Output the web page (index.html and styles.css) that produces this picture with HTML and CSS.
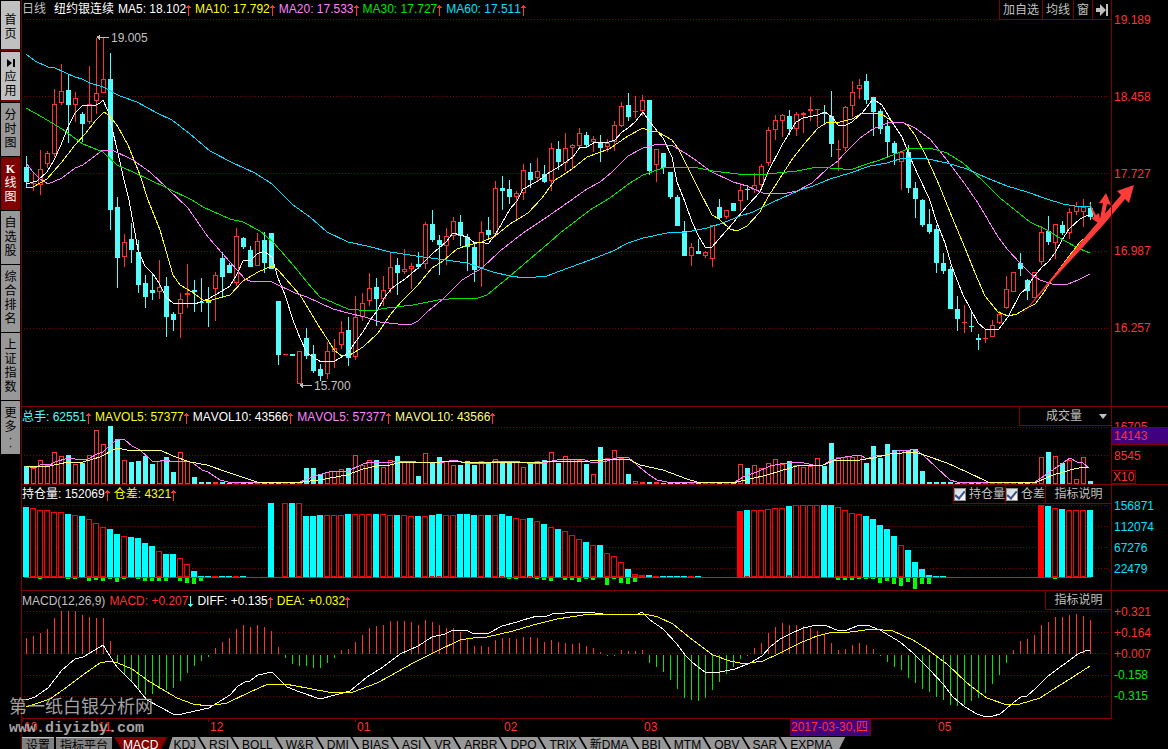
FILE: index.html
```html
<!DOCTYPE html>
<html lang="zh-CN">
<head>
  <meta charset="UTF-8" />
  <title>纽约银连续 日线</title>
  <link rel="stylesheet" href="styles.css">
</head>
<body>
  <svg class="sprites" width="0" height="0" aria-hidden="true">
    <symbol id="up" viewBox="0 0 5 12">
      <path d="M2 1h1v11h-1zM1 2h3v1h-3zM0 3h5v1h-5z" fill="#ff3232"/>
    </symbol>
    <symbol id="down" viewBox="0 0 5 12">
      <path d="M2 0h1v11h-1zM1 9h3v1h-3zM0 8h5v1h-5z" fill="#54fcfc"/>
    </symbol>
  </svg>

  <div class="app">
    <nav class="sidebar">
      <button type="button" class="side light">首页</button>
      <button type="button" class="side light">
        <svg width="8" height="8" viewBox="0 0 8 8"><path d="M0 0l5 4l-5 4zM6 0h2v8h-2z"/></svg>
        应用
      </button>
      <button type="button" class="side">分时图</button>
      <button type="button" class="side active"><b>K</b>线图</button>
      <button type="button" class="side">自选股</button>
      <button type="button" class="side">综合排名</button>
      <button type="button" class="side">上证指数</button>
      <button type="button" class="side more">更多<span>·</span><span>·</span></button>
    </nav>

    <main class="main">
      <section class="pane">
        <div class="plot">
          <header class="head price-head">
            <span class="silver period">日线</span>
            <span class="white">纽约银连续</span>
            <span class="white">MA5: 18.102<svg class="arrow"><use href="#up"/></svg></span>
            <span class="yellow">MA10: 17.792<svg class="arrow"><use href="#up"/></svg></span>
            <span class="pink">MA20: 17.533<svg class="arrow"><use href="#up"/></svg></span>
            <span class="green">MA30: 17.727<svg class="arrow"><use href="#up"/></svg></span>
            <span class="aqua">MA60: 17.511<svg class="arrow"><use href="#up"/></svg></span>
            <div class="tools">
              <button type="button">加自选</button>
              <button type="button">均线</button>
              <button type="button">窗</button>
              <button type="button" aria-label="下一个">
                <svg width="12" height="12" viewBox="0 0 12 12"><path d="M0 4h4v-4l6 6l-6 6v-4h-4zM10 0h2v12h-2z" fill="#c0c0c0"/></svg>
              </button>
            </div>
          </header>
          <svg class="chart price-chart" id="price" viewBox="22 18 1089 388" preserveAspectRatio="none"></svg>
        </div>
        <div class="axis price-axis">
          <span>19.189</span>
          <span>18.458</span>
          <span>17.727</span>
          <span>16.987</span>
          <span>16.257</span>
        </div>
      </section>

      <section class="pane">
        <div class="plot">
          <header class="head tall">
            <span class="cyan">总手: 62551<svg class="arrow"><use href="#up"/></svg></span>
            <span class="yellow">MAVOL5: 57377<svg class="arrow"><use href="#up"/></svg></span>
            <span class="white">MAVOL10: 43566<svg class="arrow"><use href="#up"/></svg></span>
            <span class="pink">MAVOL5: 57377<svg class="arrow"><use href="#up"/></svg></span>
            <span class="cream">MAVOL10: 43566<svg class="arrow"><use href="#up"/></svg></span>
            <div class="tools picker">
              <select aria-label="指标">
                <option>成交量</option>
              </select>
              <svg width="8" height="5" viewBox="0 0 8 5"><path d="M0 0h8l-4 5z" fill="#c0c0c0"/></svg>
            </div>
          </header>
          <svg class="chart volume-chart" id="volume" viewBox="22 426 1089 58" preserveAspectRatio="none"></svg>
        </div>
        <div class="axis volume-axis">
          <span class="top">16705</span>
          <span class="current">14143</span>
          <span>8545</span>
          <span class="unit">X10</span>
        </div>
      </section>

      <section class="pane">
        <div class="plot">
          <header class="head">
            <span class="white">持仓量: 152069<svg class="arrow"><use href="#up"/></svg></span>
            <span class="yellow">仓差: 4321<svg class="arrow"><use href="#up"/></svg></span>
            <div class="tools">
              <label><input type="checkbox" checked>持仓量</label>
              <label><input type="checkbox" checked>仓差</label>
              <button type="button" class="help">指标说明</button>
            </div>
          </header>
          <svg class="chart position-chart" id="position" viewBox="22 503 1089 87" preserveAspectRatio="none"></svg>
        </div>
        <div class="axis position-axis">
          <span>156871</span>
          <span>112074</span>
          <span>67276</span>
          <span>22479</span>
        </div>
      </section>

      <section class="pane last">
        <div class="plot">
          <header class="head tall">
            <span class="silver">MACD(12,26,9)</span>
            <span class="red">MACD: +0.207<svg class="arrow"><use href="#down"/></svg></span>
            <span class="white">DIFF: +0.135<svg class="arrow"><use href="#up"/></svg></span>
            <span class="yellow">DEA: +0.032<svg class="arrow"><use href="#up"/></svg></span>
            <div class="tools">
              <button type="button" class="help">指标说明</button>
            </div>
          </header>
          <svg class="chart macd-chart" id="macd" viewBox="22 610 1089 108" preserveAspectRatio="none"></svg>
        </div>
        <div class="axis macd-axis">
          <span>+0.321</span>
          <span>+0.164</span>
          <span>+0.007</span>
          <span class="neg">-0.158</span>
          <span class="neg">-0.315</span>
        </div>
      </section>

      <svg class="chart months" id="months" viewBox="22 719 1146 18" preserveAspectRatio="none"></svg>

      <footer class="bottom">
        <button type="button" class="box">设置</button>
        <button type="button" class="box">指标平台</button>
        <button type="button" class="tab current">MACD</button>
        <div class="tabs">
          <button type="button" class="tab">KDJ</button>
          <button type="button" class="tab">RSI</button>
          <button type="button" class="tab">BOLL</button>
          <button type="button" class="tab">W&amp;R</button>
          <button type="button" class="tab">DMI</button>
          <button type="button" class="tab">BIAS</button>
          <button type="button" class="tab">ASI</button>
          <button type="button" class="tab">VR</button>
          <button type="button" class="tab">ARBR</button>
          <button type="button" class="tab">DPO</button>
          <button type="button" class="tab">TRIX</button>
          <button type="button" class="tab">新DMA</button>
          <button type="button" class="tab">BBI</button>
          <button type="button" class="tab">MTM</button>
          <button type="button" class="tab">OBV</button>
          <button type="button" class="tab">SAR</button>
          <button type="button" class="tab">EXPMA</button>
        </div>
      </footer>
    </main>

    <div class="watermark">
      <p class="name">第一纸白银分析网</p>
      <p class="site">www.diyizby.com</p>
    </div>
  </div>

  <script src="charts.js"></script>
</body>
</html>
```

FILE: styles.css
```css
* {
  box-sizing: border-box;
}
body {
  margin: 0;
  height: 100vh;
  overflow: hidden;
  background: #000;
  color: #c0c0c0;
  font-family: "Liberation Sans", Arial, "Noto Sans CJK SC", sans-serif;
  font-size: 12px;
  line-height: 16px;
  font-kerning: none;
}
button, select {
  margin: 0;
  padding: 0;
  border: 0;
  background: none;
  color: inherit;
  font: inherit;
  font-kerning: none;
  cursor: pointer;
}
.sprites {
  position: absolute;
}
.app {
  position: relative;
  display: grid;
  grid-template-columns: 21px 1fr;
}

/* left menu */
.sidebar {
  display: flex;
  flex-direction: column;
  gap: 1px;
  padding: 1px 1px 0 1px;
}
.side {
  padding: 5px 3px 6px;
  background: #989898;
  color: #000;
  line-height: 14px;
  word-break: break-all;
}
.side.light {
  min-height: 50px;
  padding: 6px 3px 2px;
  background: #c0c0c0;
  border-bottom: 2px solid #800000;
}
.side.active {
  background: #800000;
  color: #fff;
}
.side b {
  display: block;
  font-family: "Liberation Serif", serif;
}
.side svg {
  display: block;
  margin: 0 auto 3px;
}
.side.more {
  padding-bottom: 4px;
}
.side.more span {
  display: block;
  line-height: 8px;
}

/* panes */
.main {
  border-left: 1px solid #800000;
}
.pane {
  display: grid;
  grid-template-columns: 1fr 57px;
  border-bottom: 1px solid #800000;
}
.pane.last {
  border-bottom: 0;
}
.pane.last .plot {
  border-bottom: 1px solid #800000;
}
.head {
  display: flex;
  align-items: center;
  gap: 4px;
  height: 18px;
  white-space: nowrap;
}
.head.tall {
  height: 19px;
}
.period {
  margin-right: 4px;
}
.arrow {
  width: 5px;
  height: 12px;
  vertical-align: -3px;
  shape-rendering: crispEdges;
}
.chart {
  display: block;
  width: 100%;
  shape-rendering: crispEdges;
}
.price-chart {
  height: 388px;
  overflow: visible;
}
.volume-chart { height: 58px; }
.position-chart { height: 87px; }
.macd-chart { height: 108px; }
.months { height: 18px; }

.white { color: #fff; }
.silver { color: #c0c0c0; }
.yellow { color: #ff0; }
.pink { color: #ff80ff; }
.green { color: #00e600; }
.aqua { color: #00e0ff; }
.cyan { color: #54fcfc; }
.cream { color: #ffff80; }
.red { color: #ff3232; }

/* small controls on the right of each header */
.tools {
  display: flex;
  align-self: flex-start;
  height: 19px;
  margin-left: auto;
  border-bottom: 1px solid #800000;
}
.price-head .tools {
  height: 20px;
}
.tools button,
.tools label {
  display: flex;
  align-items: center;
  justify-content: center;
  padding: 0 3px;
  border-left: 1px solid #800000;
}
.tools .help {
  width: 66px;
}
.tools label {
  gap: 3px;
  padding: 0;
}
.tools input {
  appearance: none;
  display: flex;
  justify-content: center;
  width: 12px;
  height: 13px;
  margin: 0;
  border: 1px solid #8e8f8f;
  background: linear-gradient(135deg, #cfd6de, #fff);
}
.tools input:checked::after {
  content: "";
  width: 4px;
  height: 8px;
  border: solid #33548c;
  border-width: 0 2px 2px 0;
  transform: rotate(40deg);
}
.picker {
  align-items: center;
  width: 92px;
  border-left: 1px solid #800000;
}
.picker select {
  flex: 1;
  appearance: none;
  padding-left: 26px;
}
.picker svg {
  margin-right: 4px;
}

/* scales */
.axis {
  display: flex;
  flex-direction: column;
  border-left: 1px solid #800000;
  color: #ff3232;
}
.axis span {
  padding-left: 2px;
}
.price-axis {
  padding-top: 12px;
}
.price-axis span {
  height: 77px;
}
.volume-axis span {
  line-height: 22px;
}
.volume-axis .top {
  height: 20px;
  padding-top: 12px;
  line-height: 16px;
  overflow: hidden;
}
.volume-axis .current {
  height: 18px;
  line-height: 16px;
  background: #400080;
  border: solid #800000;
  border-width: 1px 0;
}
.volume-axis .unit {
  align-self: flex-start;
  margin-top: 3px;
  padding: 0 1px;
  line-height: 12px;
  border: 1px solid #800000;
  border-left: 0;
}
.position-axis {
  padding-top: 11px;
  color: #00e0ff;
}
.position-axis span,
.macd-axis span {
  line-height: 21px;
}
.macd-axis {
  padding-top: 11px;
}
.axis .neg {
  color: #00e600;
}

/* chart parts */
.grid {
  stroke: #800000;
  stroke-dasharray: 1 2;
}
.line {
  fill: none;
  stroke: currentColor;
}
.note {
  fill: #c0c0c0;
}
.month {
  fill: #ff3232;
}
.trend {
  fill: #ff3c3a;
  shape-rendering: auto;
}

/* bottom tabs */
.bottom {
  display: flex;
  color: #000;
  line-height: 16px;
  white-space: nowrap;
}
.box {
  height: 17px;
  margin-right: 2px;
  padding: 0 4px;
  background: #808080;
  border-top: 1px solid #c0c0c0;
}
.tabs {
  display: flex;
  height: 16px;
  padding-right: 6px;
  background: #989898;
  clip-path: polygon(5px 0, 100% 0, calc(100% - 8px) 100%, 0 100%);
}
.tab {
  position: relative;
  padding: 0 7px 0 6px;
}
.tabs .tab + .tab::before {
  content: "";
  position: absolute;
  left: -1px;
  top: 0;
  width: 2px;
  height: 16px;
  background: #000;
  transform: skewX(30deg);
}
.tab.current {
  height: 16px;
  padding: 0 9px;
  background: #800000;
  color: #fff;
  clip-path: polygon(0 0, 100% 0, calc(100% - 8px) 100%, 10px 100%);
}

.watermark {
  position: absolute;
  left: 9px;
  top: 696px;
  color: #b4b4b4;
  opacity: 0.9;
}
.watermark p {
  margin: 0;
}
.watermark .name {
  font-size: 18px;
  line-height: 22px;
}
.watermark .site {
  font: bold 15px/22px "Liberation Mono", monospace;
}
```

FILE: charts.js
```js
const NS = "http://www.w3.org/2000/svg";
const RED = "#ff3232";
const CYAN = "#54fcfc";

// direction, high, body top, body bottom, low
const candles = `
d 156 167 182 187|u 172 183 184 191|u 150 169 185 195|u 151 153 164 168|u 89 104 154 157
u 64 91 103 105|d 74 90 105 143|u 92 98 105 122|d 112 114 124 142|u 66 104 122 124
u 38 93 101 114|u 38 79 93 93|d 53 79 210 230|d 197 207 258 288|u 234 242 257 267
d 223 239 250 263|d 240 252 285 293|d 275 283 297 308|d 273 290 293 300|u 260 287 292 299
d 277 286 317 337|d 312 314 320 331|u 293 299 314 338|u 264 293 295 308|d 280 290 292 312
d 278 302 303 312|d 287 301 303 327|u 272 275 289 321|d 252 258 277 298|d 263 265 273 273
u 228 236 283 286|d 237 238 247 249|d 246 250 267 267|u 233 241 266 266|d 232 240 263 273
d 233 233 269 269|d 301 301 355 365|u 354 354 355 355|d 354 354 356 356|u 351 351 384 384
d 328 338 356 359|d 345 354 371 373|d 364 369 376 381|u 342 351 374 379|u 339 348 352 368
u 321 332 345 349|d 317 330 358 366|u 296 317 357 360|u 293 303 317 321|u 273 288 301 306
d 278 287 299 326|u 276 290 299 306|u 253 267 289 293|d 258 265 273 295|u 249 269 272 274
u 263 266 269 289|d 252 264 267 269|u 222 224 264 269|d 210 224 240 242|d 235 240 245 275
u 228 236 246 265|u 217 221 236 240|d 215 222 236 246|d 234 237 247 271|d 242 247 270 282
u 221 232 268 287|d 217 230 235 239|u 181 188 234 237|d 176 188 191 210|d 180 189 197 204
u 191 193 197 221|u 164 170 193 200|d 163 172 180 188|u 158 171 178 182|d 165 174 182 183
u 143 148 181 191|d 141 149 162 170|u 133 148 163 171|u 144 145 148 168|u 128 133 146 149
d 132 135 145 147|u 136 139 142 152|d 135 143 148 162|u 139 143 147 152|u 121 125 142 151
u 102 106 126 127|d 93 105 117 121|u 96 111 112 118|u 95 100 111 116|d 100 100 171 175
u 149 149 165 182|d 153 153 168 174|d 172 172 197 199|d 195 197 226 226|d 221 231 256 256
u 243 247 256 266|d 239 251 254 254|u 251 252 256 258|u 225 225 259 267|d 199 207 218 219
u 210 210 217 219|d 203 203 211 211|u 183 190 201 211|d 185 189 190 200|u 173 185 190 193
u 164 166 185 190|u 127 130 163 166|u 115 120 130 140|u 114 115 121 137|d 110 116 129 135
u 112 114 129 136|u 112 113 115 133|u 97 109 111 121|u 109 109 110 127|d 105 112 114 125
d 91 116 144 157|u 140 149 150 171|u 106 107 148 151|u 81 92 106 117|u 79 85 89 99
d 74 81 100 104|d 97 97 112 136|d 109 111 129 134|d 120 126 142 158|d 141 143 153 165
u 151 152 162 190|d 145 152 188 193|d 182 188 199 218|d 199 200 225 227|d 209 224 232 234
d 225 229 263 273|d 253 263 271 274|d 266 269 309 309|d 296 309 319 331|u 305 322 323 333
d 312 326 327 332|d 334 338 340 350|u 329 338 339 343|u 320 325 337 337|u 311 314 323 324
u 276 289 308 309|u 272 272 292 292|d 253 263 269 276|d 279 280 291 300|u 272 272 298 298
u 226 232 262 265|d 216 231 242 245|u 224 224 243 259|d 221 225 233 235|u 208 212 233 239
u 202 206 212 215|u 199 207 212 227|d 202 208 217 220
`.trim().split(/[|\n]/).map(row => {
  const [dir, ...v] = row.split(" ");
  return { up: dir === "u", v: v.map(Number) };
});

const ma = {
  white: "26,184 37,181 47,172 54,160 61,145 68,127 75,113 82,106 96,105 100,103 103,100 108,111 112,128 118,153 124,180 129,200 138,250 145,266 153,274 159,283 166,297 173,303 195,304 208,299 222,291 230,286 237,274 243,261 251,260 257,254 264,251 272,257 278,278 285,295 293,320 300,338 307,353 321,362 335,361 348,353 356,341 363,332 370,320 377,311 384,298 392,288 405,279 418,268 432,254 446,242 453,233 467,237 475,243 482,242 488,244 495,235 502,223 510,209 517,201 523,189 538,181 550,172 560,166 573,157 580,147 587,147 595,142 609,142 615,140 622,132 628,128 635,122 643,112 649,121 663,138 672,157 677,182 685,202 692,222 698,235 705,247 712,247 719,239 733,223 742,212 748,205 760,192 768,172 782,145 796,122 803,118 818,115 825,112 832,117 838,125 846,125 852,122 863,112 873,99 882,105 892,122 902,137 910,157 918,175 929,198 937,223 945,243 952,267 963,295 978,323 985,329 998,330 1008,317 1020,294 1027,288 1033,278 1042,267 1048,262 1055,253 1062,240 1069,229 1080,219 1086,216 1090,215",
  yellow: "26,187 33,187 40,183 47,179 61,163 75,145 85,134 96,120 104,112 110,116 118,127 128,145 140,175 148,200 160,230 173,275 180,285 192,292 203,300 208,301 230,295 243,281 258,272 272,266 278,270 300,295 320,328 335,351 342,356 350,355 363,347 378,333 390,315 402,301 417,286 432,268 443,261 457,249 468,245 482,242 495,236 510,224 528,213 542,198 555,180 560,177 572,169 587,157 609,149 628,136 643,128 649,131 658,132 672,140 678,148 688,168 698,188 712,215 719,219 730,229 737,231 747,226 760,212 768,197 782,175 793,158 805,143 818,128 828,122 840,122 852,119 862,113 875,113 883,115 893,122 903,122 908,126 915,135 927,158 937,180 950,212 965,248 975,273 985,296 998,312 1008,316 1017,314 1027,308 1035,304 1042,295 1055,275 1070,255 1080,242 1084,239",
  pink: "26,163 33,172 40,179 48,184 62,178 75,168 83,165 103,150 112,150 133,160 150,172 167,188 188,208 208,237 222,253 237,270 245,279 250,281 272,282 295,293 307,297 333,309 348,313 365,317 380,322 398,324 412,324 418,321 427,312 443,299 462,280 482,268 500,251 523,233 547,217 560,208 587,189 600,182 612,172 628,156 643,148 658,144 673,146 685,153 697,161 710,171 733,182 747,186 763,193 782,194 797,191 812,183 827,169 838,161 843,155 860,138 873,129 887,123 902,122 915,128 930,139 943,155 962,180 978,203 998,237 1008,250 1020,263 1032,275 1040,280 1052,284 1068,284 1078,280 1090,274",
  green: "26,108 42,117 62,129 83,144 103,152 117,165 133,172 167,188 192,200 203,207 230,219 243,222 260,231 273,242 287,258 293,265 312,288 320,297 348,309 370,311 387,308 413,305 438,300 460,298 475,299 487,295 510,276 530,259 550,242 560,233 577,220 593,208 610,198 630,183 643,175 663,168 675,167 693,167 713,171 738,174 760,175 777,173 797,171 817,167 843,169 853,169 867,164 880,160 893,155 910,148 930,148 947,153 963,163 982,180 1000,198 1030,222 1047,230 1063,240 1080,249 1090,253",
  aqua: "26,54 35,61 48,67 55,68 75,77 82,79 90,83 103,87 120,96 137,102 157,113 172,120 190,134 210,151 233,163 255,173 272,184 293,205 310,217 327,232 348,242 367,246 390,252 423,257 453,261 467,263 493,272 510,276 525,278 547,276 560,271 590,260 613,251 628,243 643,238 667,233 687,232 707,228 723,223 740,216 753,212 773,202 800,190 813,186 830,179 850,173 870,166 887,163 903,158 928,159 947,163 967,169 987,178 1007,186 1027,192 1047,199 1063,204 1075,206 1090,207"
};

const volumes = [
  18, 16, 24, 19, 32, 28, 29, 20, 21, 29, 54, 40, 58, 45, 24, 22, 23, 28, 20, 23, 27, 12, 32, 23, 7, 2, 2, 2, 2,
  1, 1, 1, 1, 1, 1, 1, 1, 1, 1, 1, 16, 16, 10, 12, 13, 15, 16, 29, 19, 24, 24, 17, 24, 28,
  22, 22, 8, 31, 21, 27, 23, 19, 19, 23, 19, 23, 21, 25, 23, 23, 22, 17, 20, 23, 24, 32, 21, 28, 25, 24, 20, 10,
  37, 26, 34, 26, 10, 3, 2, 2, 2, 1, 1, 1, 1, 1, 1, 1, 1, 1, 1, 1, 20, 16, 19, 16, 21, 25, 20, 23,
  19, 17, 18, 26, 18, 41, 27, 27, 27, 29, 21, 38, 26, 40, 34, 34, 34, 35, 13, 2, 2, 2, 2,
  1, 1, 1, 1, 1, 1, 1, 1, 1, 1, 1, 1, 27, 32, 28, 21, 24, 5, 27, 3
];

const volumeMa = {
  pink: "26,466 35,468 42,464 50,465 55,462 68,458 75,459 88,459 97,454 103,452 111,444 118,439 125,440 132,446 140,450 152,461 160,461 166,460 173,462 187,461 193,463 202,470 208,472 220,480 228,482 300,482 310,478 325,473 333,471 348,471 363,464 370,462 383,463 392,462 400,461 412,461 420,463 427,462 440,463 453,460 467,463 477,464 487,463 497,461 513,461 527,463 543,463 557,460 570,459 582,459 593,463 607,461 620,457 628,457 637,465 648,474 657,480 667,482 735,482 743,477 757,472 770,466 780,464 800,462 813,465 823,465 832,460 845,457 860,455 867,459 873,456 887,455 897,451 910,450 915,449 923,455 950,480 957,482 1035,482 1047,474 1057,467 1070,458 1077,462 1083,463 1089,468",
  cream: "26,467 50,466 68,462 83,462 100,457 117,448 127,450 160,450 173,456 190,462 207,465 227,472 245,478 257,482 303,482 325,479 347,475 363,469 377,466 390,465 402,462 440,462 455,461 467,463 497,462 543,462 557,461 590,461 603,460 617,459 630,460 640,465 663,470 687,479 697,482 737,482 750,479 767,475 780,471 800,465 823,465 833,461 860,460 873,458 890,454 915,452 927,456 947,463 967,472 988,482 1037,482 1053,475 1070,470 1083,467 1089,467"
};

const positions = [
  70, 69, 67, 67, 65, 65, 63, 62, 61, 58, 54, 50, 48, 43, 41, 40, 39, 34, 31, 26, 23, 23, 19, 13, 6,
  1, 1, 1, 1, 1, 1, 1, 0, 0, 0, 74, 0, 74, 74, 74, 61, 61, 62, 62, 62, 62, 63, 63, 63, 63, 63, 63, 62, 62,
  62, 61, 61, 61, 62, 63, 62, 62, 63, 63, 62, 62, 62, 62, 63, 61, 59, 58, 59, 56, 53, 50, 48, 46, 42, 38, 35,
  32, 32, 24, 21, 15, 8, 3, 2, 2, 1, 1, 1, 1, 1, 1, 1, 0, 0, 0, 0, 0,
  66, 67, 67, 67, 68, 69, 69, 71, 72, 72, 72, 72, 72, 72, 70, 67, 64, 63, 61, 58, 52, 48, 41, 32, 27, 15, 8, 2, 1, 1,
  0, 0, 0, 0, 0, 0, 0, 0, 0, 0, 0, 0, 0, 72, 71, 69, 68, 67, 67, 67, 67
];
// first day of a new contract is drawn solid
const solidDays = [102, 145];

// day: change in open interest
const changes = {
  2: -1, 6: -1, 7: -1, 9: -3, 10: -2, 11: -3, 12: -1, 13: -4, 14: -1, 16: -1, 17: -3, 18: -3, 19: -3, 20: -3,
  22: -3, 23: -5, 24: -6, 25: -3, 58: 1, 59: 1, 68: 1, 69: -1, 70: -1, 72: 1, 73: -1, 74: -2, 75: -3, 77: -2,
  78: -2, 79: -4, 80: -1, 81: -2, 83: -7, 84: -1, 85: -5, 86: -6, 87: -4, 103: 1, 109: 2, 116: -2, 117: -2,
  118: -2, 119: -1, 120: -1, 121: -1, 122: -5, 123: -3, 124: -6, 125: -8, 126: -4, 127: -11, 128: -6, 129: -6, 147: -1
};

const macd = [
  16, 18, 21, 25, 36, 43, 43, 43, 39, 37, 36, 36, 13, -8, -20, -27, -35, -40, -39, -34, -35, -33, -26, -18, -11, -6, -2,
  6, 12, 16, 25, 29, 27, 29, 27, 23, 7, -3, -9, -11, -11, -13, -13, -8, -3, 4, 5, 12, 19, 26, 28, 29, 33, 33,
  33, 32, 29, 34, 32, 29, 26, 26, 22, 16, 8, 8, 7, 14, 16, 16, 15, 17, 17, 16, 12, 14, 12, 11, 10, 11, 8, 6, 2,
  -1, -1, 4, 3, 3, 4, -8, -12, -17, -25, -34, -43, -45, -46, -43, -35, -27, -19, -12, -4, -1,
  6, 11, 21, 27, 31, 29, 29, 28, 26, 23, 19, 11, 4, 5, 9, 11, 9, 5,
  -1, -7, -12, -15, -23, -28, -34, -37, -42, -45, -50, -51, -50, -46, -43, -38, -29, -20, -8,
  4, 13, 15, 19, 29, 32, 37, 37, 39, 40, 38, 34
];

const macdLines = {
  white: "26,700 35,697 48,688 62,670 75,659 83,657 95,650 103,645 108,653 117,667 133,683 147,700 160,707 173,714 182,714 195,711 209,708 230,695 238,686 245,682 250,681 258,675 272,672 287,687 300,692 320,699 335,695 350,691 367,677 383,667 400,654 418,646 432,637 445,634 453,630 468,631 474,634 489,633 502,626 517,622 523,620 537,616 545,617 552,614 578,612 595,613 610,615 620,614 638,614 642,612 650,620 663,629 677,644 685,655 693,663 705,672 720,672 735,669 750,663 762,656 770,647 780,639 790,634 803,628 817,625 827,626 839,631 847,630 857,626 867,625 880,630 900,642 913,653 930,670 943,684 953,697 965,707 977,714 986,717 993,716 1000,714 1013,703 1021,697 1027,696 1035,689 1047,677 1063,665 1078,654 1085,651 1090,650",
  yellow: "26,707 50,699 67,687 87,672 100,663 110,661 118,663 132,669 150,682 177,698 193,704 208,706 227,703 250,692 268,684 285,684 307,688 333,693 353,692 377,683 390,676 413,663 437,651 460,640 473,638 487,637 513,631 533,625 557,619 590,614 607,615 630,614 645,614 658,617 673,624 690,638 713,655 730,661 740,663 750,663 763,661 780,653 800,643 817,636 833,632 850,632 873,629 893,631 913,640 927,649 947,664 967,683 987,698 1007,705 1020,704 1040,698 1057,687 1073,677 1090,666"
};

function add(svg, tag, attrs, text) {
  const el = document.createElementNS(NS, tag);
  for (const key in attrs) el.setAttribute(key, attrs[key]);
  if (text) el.textContent = text;
  svg.appendChild(el);
  return el;
}

function rect(svg, x, y, width, height, fill) {
  if (height > 0) add(svg, "rect", { x, y, width, height, fill });
}

// solid bar for a falling day, outlined bar for a rising one
function bar(svg, x, y, width, height, color, hollow) {
  rect(svg, x, y, width, height, color);
  if (hollow) rect(svg, x + 1, y + 1, width - 2, height - 2, "#000");
}

function grid(svg, rows) {
  rows.forEach(y => add(svg, "path", { class: "grid", d: `M24 ${y}.5H1110` }));
}

function lines(svg, set) {
  for (const name in set) add(svg, "polyline", { class: "line " + name, points: set[name] });
}

const dayX = i => 26 + i * 7;

function drawPrice() {
  const svg = document.getElementById("price");
  grid(svg, [19, 96, 173, 251, 328]);
  candles.forEach(({ up, v: [high, top, bottom, low] }, i) => {
    const color = up ? RED : CYAN;
    rect(svg, dayX(i), high, 1, low - high, color);
    bar(svg, dayX(i) - 2, top, 5, bottom - top, color, up);
  });
  lines(svg, ma);

  add(svg, "path", { class: "note", d: "M97 37h12v1h-12zM96 37l4-2v5z" });
  add(svg, "text", { class: "note", x: 111, y: 42 }, "19.005");
  add(svg, "path", { class: "note", d: "M300 385h12v1h-12zM299 385l4-2v5z" });
  add(svg, "text", { class: "note", x: 314, y: 390 }, "15.700");

  add(svg, "path", { class: "trend", d: "M1020 317L1037 296L1080 243L1121 195L1117 191L1134 185L1129 203L1125 199L1105 223L1050 283Z" });
  add(svg, "path", { class: "trend", d: "M1106 193L1099 203L1103 203L1099 224L1104 219L1107 204L1111 205Z" });
  add(svg, "path", { class: "trend", d: "M1089 202L1096 215L1099 213L1101 225L1091 218L1094 217Z" });
}

function drawVolume() {
  const svg = document.getElementById("volume");
  grid(svg, [427, 455]);
  volumes.forEach((h, i) => {
    const up = candles[i].up;
    bar(svg, dayX(i) - 2, 484 - h, 5, h, up ? RED : CYAN, up);
  });
  lines(svg, volumeMa);
}

function drawPosition() {
  const svg = document.getElementById("position");
  grid(svg, [505, 526, 547, 568]);
  positions.forEach((h, i) => {
    const up = candles[i].up;
    bar(svg, dayX(i) - 3, 577 - h, 6, h, up ? "#f00" : "#0ff", up && !solidDays.includes(i));
  });
  rect(svg, 24, 577, 1067, 1, "#008040");
  for (const i in changes) {
    const h = changes[i];
    if (h < 0) rect(svg, dayX(+i) - 2, 578, 4, -h, "#0f0");
    else rect(svg, dayX(+i) - 2, 577 - h, 4, h, "#f00");
  }
}

function drawMacd() {
  const svg = document.getElementById("macd");
  grid(svg, [611, 632, 653, 675, 696]);
  macd.forEach((h, i) => {
    if (h > 0) rect(svg, dayX(i), 654 - h, 1, h, RED);
    else rect(svg, dayX(i), 655, 1, -h, "#00e600");
  });
  lines(svg, macdLines);
}

function drawMonths() {
  const svg = document.getElementById("months");
  const months = { 22: "10", 96: "11", 208: "12", 355: "01", 502: "02", 642: "03", 936: "05" };
  for (const x in months) {
    rect(svg, x, 719, 1, 3, "#800000");
    add(svg, "text", { class: "month", x: +x + 2, y: 731 }, months[x]);
  }
  rect(svg, 790, 719, 81, 17, "#800000");
  rect(svg, 791, 719, 79, 16, "#400080");
  add(svg, "text", { class: "month", x: 791, y: 731 }, "2017-03-30,四");
}

drawPrice();
drawVolume();
drawPosition();
drawMacd();
drawMonths();
```
